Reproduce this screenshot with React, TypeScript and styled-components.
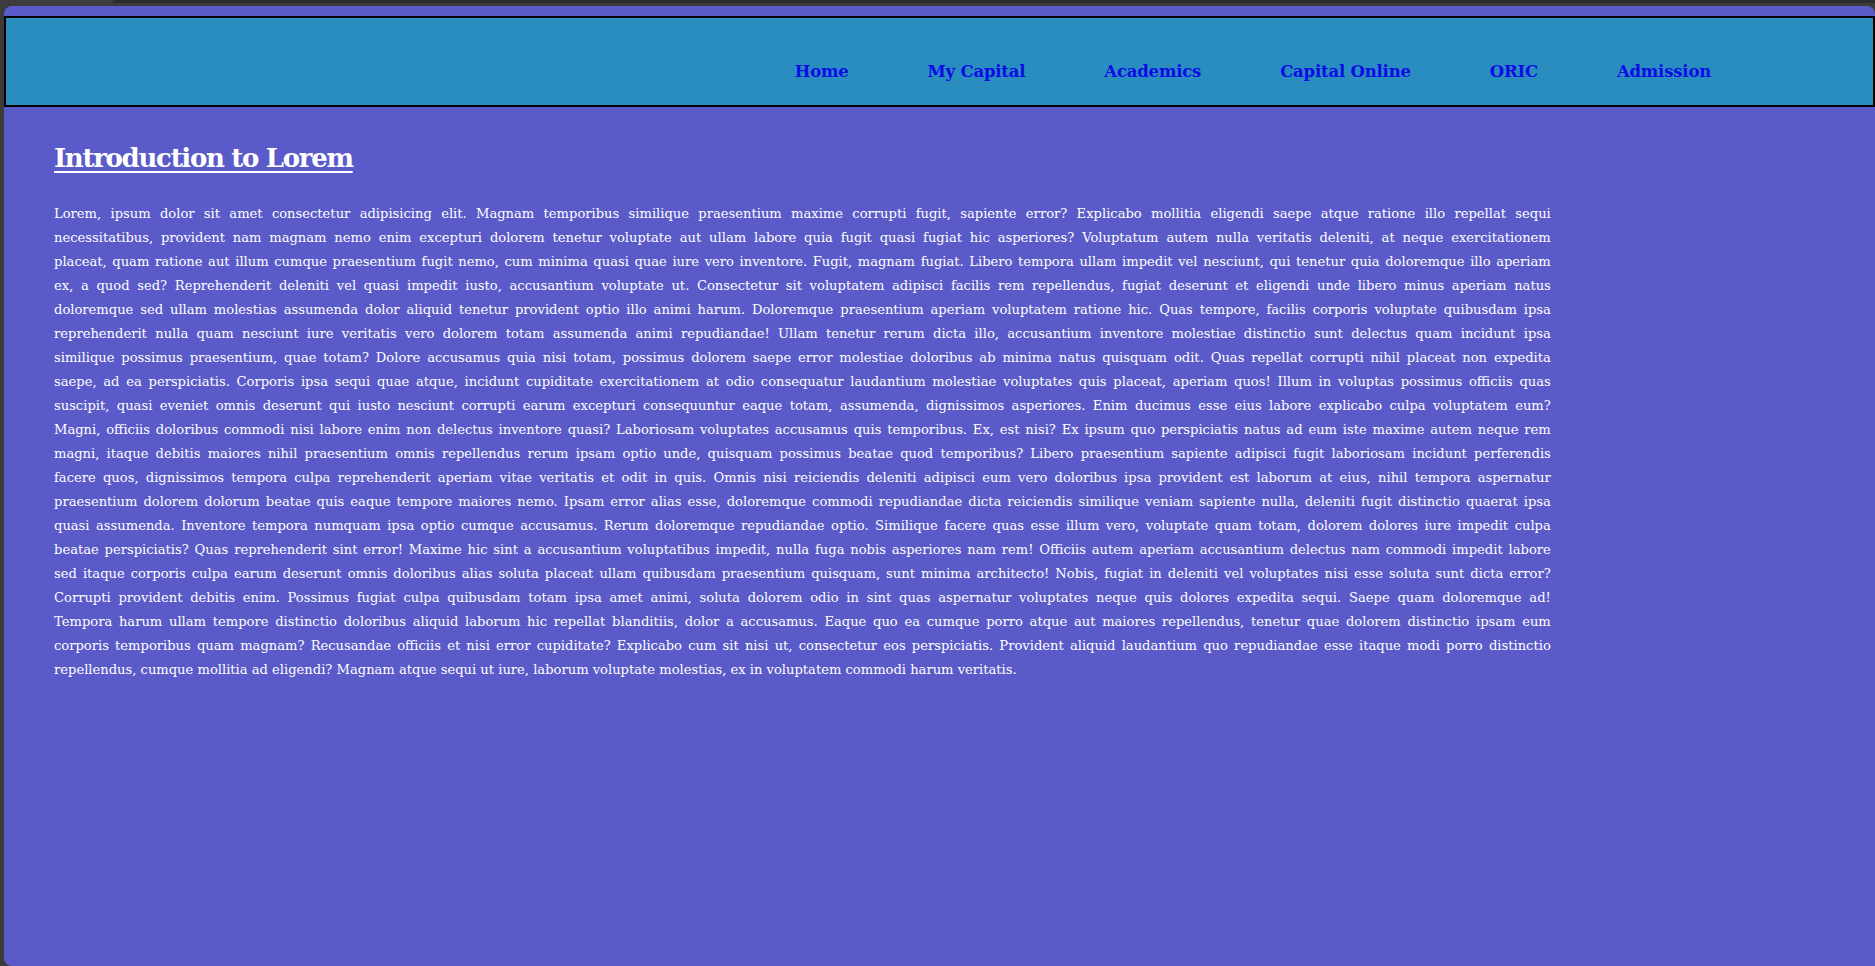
import React from 'react'
import styled, { createGlobalStyle } from 'styled-components'

const GlobalStyle = createGlobalStyle`
  html, body {
    margin: 0;
    padding: 0;
    background-color: #3c3c3c;
  }
  * {
    box-sizing: border-box;
  }
`

const navLinks = ['Home', 'My Capital', 'Academics', 'Capital Online', 'ORIC', 'Admission']

// 원본 화면과 같은 줄바꿈을 위해 줄 단위로 나눔
const loremLines = [
  'Lorem, ipsum dolor sit amet consectetur adipisicing elit. Magnam temporibus similique praesentium maxime corrupti fugit, sapiente error? Explicabo mollitia eligendi saepe atque ratione illo repellat sequi',
  'necessitatibus, provident nam magnam nemo enim excepturi dolorem tenetur voluptate aut ullam labore quia fugit quasi fugiat hic asperiores? Voluptatum autem nulla veritatis deleniti, at neque exercitationem',
  'placeat, quam ratione aut illum cumque praesentium fugit nemo, cum minima quasi quae iure vero inventore. Fugit, magnam fugiat. Libero tempora ullam impedit vel nesciunt, qui tenetur quia doloremque illo aperiam',
  'ex, a quod sed? Reprehenderit deleniti vel quasi impedit iusto, accusantium voluptate ut. Consectetur sit voluptatem adipisci facilis rem repellendus, fugiat deserunt et eligendi unde libero minus aperiam natus',
  'doloremque sed ullam molestias assumenda dolor aliquid tenetur provident optio illo animi harum. Doloremque praesentium aperiam voluptatem ratione hic. Quas tempore, facilis corporis voluptate quibusdam ipsa',
  'reprehenderit nulla quam nesciunt iure veritatis vero dolorem totam assumenda animi repudiandae! Ullam tenetur rerum dicta illo, accusantium inventore molestiae distinctio sunt delectus quam incidunt ipsa',
  'similique possimus praesentium, quae totam? Dolore accusamus quia nisi totam, possimus dolorem saepe error molestiae doloribus ab minima natus quisquam odit. Quas repellat corrupti nihil placeat non expedita',
  'saepe, ad ea perspiciatis. Corporis ipsa sequi quae atque, incidunt cupiditate exercitationem at odio consequatur laudantium molestiae voluptates quis placeat, aperiam quos! Illum in voluptas possimus officiis quas',
  'suscipit, quasi eveniet omnis deserunt qui iusto nesciunt corrupti earum excepturi consequuntur eaque totam, assumenda, dignissimos asperiores. Enim ducimus esse eius labore explicabo culpa voluptatem eum?',
  'Magni, officiis doloribus commodi nisi labore enim non delectus inventore quasi? Laboriosam voluptates accusamus quis temporibus. Ex, est nisi? Ex ipsum quo perspiciatis natus ad eum iste maxime autem neque rem',
  'magni, itaque debitis maiores nihil praesentium omnis repellendus rerum ipsam optio unde, quisquam possimus beatae quod temporibus? Libero praesentium sapiente adipisci fugit laboriosam incidunt perferendis',
  'facere quos, dignissimos tempora culpa reprehenderit aperiam vitae veritatis et odit in quis. Omnis nisi reiciendis deleniti adipisci eum vero doloribus ipsa provident est laborum at eius, nihil tempora aspernatur',
  'praesentium dolorem dolorum beatae quis eaque tempore maiores nemo. Ipsam error alias esse, doloremque commodi repudiandae dicta reiciendis similique veniam sapiente nulla, deleniti fugit distinctio quaerat ipsa',
  'quasi assumenda. Inventore tempora numquam ipsa optio cumque accusamus. Rerum doloremque repudiandae optio. Similique facere quas esse illum vero, voluptate quam totam, dolorem dolores iure impedit culpa',
  'beatae perspiciatis? Quas reprehenderit sint error! Maxime hic sint a accusantium voluptatibus impedit, nulla fuga nobis asperiores nam rem! Officiis autem aperiam accusantium delectus nam commodi impedit labore',
  'sed itaque corporis culpa earum deserunt omnis doloribus alias soluta placeat ullam quibusdam praesentium quisquam, sunt minima architecto! Nobis, fugiat in deleniti vel voluptates nisi esse soluta sunt dicta error?',
  'Corrupti provident debitis enim. Possimus fugiat culpa quibusdam totam ipsa amet animi, soluta dolorem odio in sint quas aspernatur voluptates neque quis dolores expedita sequi. Saepe quam doloremque ad!',
  'Tempora harum ullam tempore distinctio doloribus aliquid laborum hic repellat blanditiis, dolor a accusamus. Eaque quo ea cumque porro atque aut maiores repellendus, tenetur quae dolorem distinctio ipsam eum',
  'corporis temporibus quam magnam? Recusandae officiis et nisi error cupiditate? Explicabo cum sit nisi ut, consectetur eos perspiciatis. Provident aliquid laudantium quo repudiandae esse itaque modi porro distinctio',
  'repellendus, cumque mollitia ad eligendi? Magnam atque sequi ut iure, laborum voluptate molestias, ex in voluptatem commodi harum veritatis.',
]

const App = () => {
  return (
    <>
      <GlobalStyle />
      <TopStrip>
        <StripTab />
        <StripRest />
      </TopStrip>
      <Page>
        <Header>
          <NavList>
            {navLinks.map((link) => (
              <NavItem key={link}>
                <NavLink href="#">{link}</NavLink>
              </NavItem>
            ))}
          </NavList>
        </Header>
        <Content>
          <Title>Introduction to Lorem</Title>
          <Paragraph>
            {loremLines.map((line, i) => (
              <Line key={i} $last={i === loremLines.length - 1}>
                {line}
              </Line>
            ))}
          </Paragraph>
        </Content>
      </Page>
    </>
  )
}

export default App

// 브라우저 상단 띠
const TopStrip = styled.div`
  display: flex;
  height: 6px;
`

const StripTab = styled.div`
  width: 112px;
  background-color: #3c3c3c;
`

const StripRest = styled.div`
  flex: 1;
  background: linear-gradient(to bottom, #2b2b2b 0, #2b2b2b 3px, #3c3c3c 3px);
  border-top-left-radius: 4px;
`

const Page = styled.div`
  margin-left: 4px;
  min-height: 960px;
  padding-top: 10px;
  background-color: #5a5ac9;
  border-radius: 8px 8px 0 8px;
  font-family: 'DejaVu Serif', serif;
`

const Header = styled.header`
  height: 91px;
  border: 2px solid #000;
  background-color: #2a8dbf;
  display: flex;
  justify-content: flex-end;
  padding: 44px 162px 0 0;
`

const NavList = styled.ul`
  display: flex;
  gap: 79px;
  list-style: none;
  margin: 0;
  padding: 0;
`

const NavItem = styled.li`
  line-height: 20px;
`

const NavLink = styled.a`
  font-family: 'DejaVu Serif', serif;
  font-size: 16.5px;
  font-weight: 700;
  letter-spacing: -0.2px;
  color: #0b0be6;
  text-decoration: none;
`

const Content = styled.main`
  margin-left: 50px;
  width: 80%;
  padding-top: 36px;
`

const Title = styled.h1`
  margin: 0 0 29px;
  font-size: 26px;
  font-weight: 700;
  letter-spacing: -1.3px;
  color: #fff;
  text-decoration: underline;
  text-decoration-thickness: 2px;
  text-underline-offset: 4px;
`

const Paragraph = styled.p`
  margin: 0;
  font-size: 13.1px;
  line-height: 24px;
  color: #fff;
`

const Line = styled.span<{ $last?: boolean }>`
  display: block;
  text-align: justify;
  text-align-last: ${({ $last }) => ($last ? 'left' : 'justify')};
`
